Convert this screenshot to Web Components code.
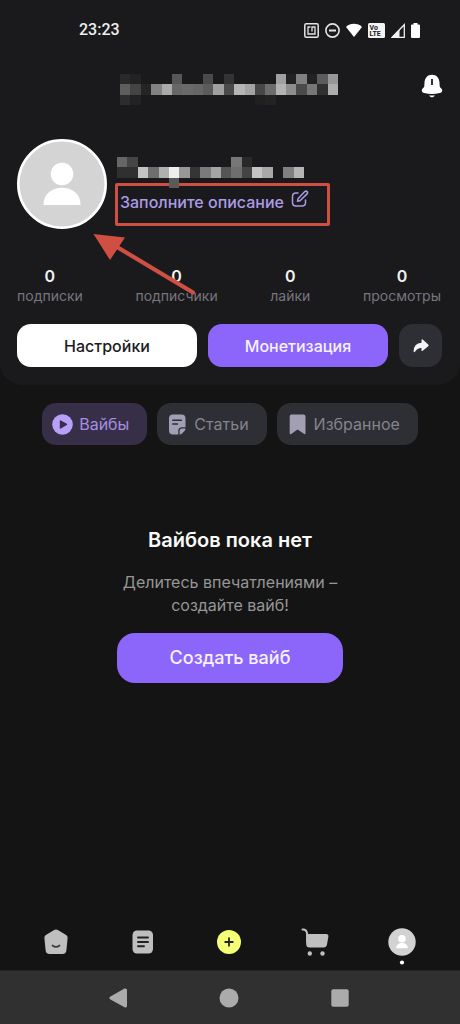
<!DOCTYPE html>
<html lang="ru">
<head>
<meta charset="utf-8">
<meta name="viewport" content="width=device-width, initial-scale=1">
<title>Профиль</title>
<style>
  html { background: #141414; }
  body { margin: 0; font-family: Inter, "Noto Sans", sans-serif; color: #fff; }
</style>
</head>
<body>
<vibe-app></vibe-app>
<script>
const define = (name, html, setup) => customElements.define(name, class extends HTMLElement {
  constructor() {
    super();
    const template = document.createElement('template');
    template.innerHTML = html;
    this.attachShadow({ mode: 'open' }).append(template.content.cloneNode(true));
  }
  connectedCallback() { if (setup) setup(this, this.shadowRoot); }
});

define('status-bar', `
<style>
  :host { display: flex; justify-content: space-between; align-items: center; height: 60px; padding: 0 40px 0 79px; box-sizing: border-box; font: 500 16px/20px Roboto, sans-serif; color: #eee; }
  div { display: flex; align-items: center; gap: 6px; }
  svg { display: block; }
</style>
<time>23:23</time>
<div>
  <svg width="15" height="15" viewBox="0 0 15 15" fill="none" stroke="#e4e4e4" stroke-width="1.5"><rect x=".8" y=".8" width="13.4" height="13.4" rx="1.5"/><path d="M6.500 4H4v7h7V4H8v4.500" stroke-width="1.300"/></svg>
  <svg width="15" height="15" viewBox="0 0 15 15" fill="none" stroke="#e4e4e4" stroke-width="1.600"><circle cx="7.500" cy="7.500" r="6.600"/><path d="M4 7.500h7" stroke-width="2"/></svg>
  <svg width="16" height="15" viewBox="0 0 16 15" fill="#fff"><path d="M8 14 0 4C4-.3 12-.3 16 4Z"/></svg>
  <svg width="17" height="15" viewBox="0 0 17 15"><rect width="17" height="15" rx="1.500" fill="#f4f4f4"/><g fill="#1a1a1c" font-family="Roboto, sans-serif" font-weight="700" font-size="7"><text x="1.500" y="7">Vo</text><text x="1.500" y="13.400">LTE</text></g></svg>
  <svg width="14" height="15" viewBox="0 0 14 15"><path d="M13.300 1.700v12.600H1Z" fill="none" stroke="#f0f0f0" stroke-width="1.300"/><path d="M8.500 6.500V14H1Z" fill="#f0f0f0"/></svg>
  <svg width="9" height="15" viewBox="0 0 9 15" fill="#fff"><path d="M2.500 0h4v1.600H8q1 0 1 1V14q0 1-1 1H1q-1 0-1-1V2.600q0-1 1-1h1.500Z"/></svg>
</div>`);

/* Censored text: rows of two-digit grey levels, ".." is a transparent cell. */
define('pixel-mosaic', `
<style>:host { display: block; } svg { display: block; }</style>`, (host, root) => {
  const rows = host.getAttribute('rows').split('|').map(r => r.trim().split(/\s+/));
  const cols = Math.max(...rows.map(r => r.length));
  const rects = rows.flatMap((r, y) => r.map((v, x) => v === '..' ? '' :
    `<rect x="${x}" y="${y}" width="1" height="1" fill="#${v}${v}${v}"/>`)).join('');
  const svg = document.createElementNS('http://www.w3.org/2000/svg', 'svg');
  svg.setAttribute('viewBox', `0 0 ${cols} ${rows.length}`);
  svg.setAttribute('preserveAspectRatio', 'none');
  svg.setAttribute('shape-rendering', 'crispEdges');
  svg.setAttribute('width', Math.round(cols * 10.4));
  svg.setAttribute('height', Math.round(rows.length * 10.4));
  svg.innerHTML = rects;
  root.append(svg);
});

define('title-bar', `
<style>
  :host { display: grid; grid-template-columns: 1fr auto 1fr; align-items: start; padding: 14px 17px 0 14px; }
  pixel-mosaic { grid-column: 2; }
  button { justify-self: end; background: none; border: 0; padding: 0; display: block; }
  svg { display: block; }
</style>
<pixel-mosaic rows="29 22 .. .. .. 57 .. .. 4a .. 33 .. .. .. .. a0 22 80 22 5c 97|5e 44 25 82 aa 66 6a 66 5b a0 4a b5 a3 47 6c b3 8e 4a 77 30 ae|2c 22 .. .. .. .. .. .. .. .. .. .. .. 20 23"></pixel-mosaic>
<button aria-label="Уведомления"><svg width="22" height="24" viewBox="0 0 22 24" fill="#fff"><path d="M11 .7c4.600 0 7.300 3.300 7.500 8l.2 3.200c.1 1 .6 1.600 1.400 2.300 2 1.800 1.200 4.200-1.400 4.900-4.800 1.200-10.600 1.200-15.400 0-2.600-.7-3.400-3.100-1.400-4.900.8-.7 1.300-1.300 1.400-2.300l.2-3.200c.2-4.700 2.900-8 7.500-8ZM8.300 21.200c1.600.3 3.800.3 5.400 0-.5 1.500-1.400 2-2.700 2s-2.200-.5-2.700-2Z"/><path d="M11 5v6" stroke="#1a1a1c" stroke-width="1.800"/></svg></button>`);

define('user-avatar', `
<style>
  :host { display: block; width: 90px; height: 90px; }
  svg { display: block; width: 100%; height: 100%; }
</style>
<svg viewBox="0 0 90 90"><circle cx="45" cy="45" r="43.700" fill="#d4d4d4" stroke="#fff" stroke-width="2.600"/><circle cx="45" cy="35" r="11.300" fill="#fff"/><path d="M26.500 66c-.8-23 37.800-23 37 0Z" fill="#fff"/></svg>`);

define('profile-head', `
<style>
  :host { display: flex; gap: 8px; padding: 34px 16px 0 17px; align-items: flex-start; position: relative; }
  .info { padding-top: 18px; }
  pixel-mosaic { position: relative; z-index: 1; margin-left: 2px; }
  a { display: flex; align-items: flex-start; gap: 7px; margin-top: -5px; box-sizing: border-box; width: 215px; height: 43px; padding: 4px 2px; border: 3px solid #cf4f43; border-radius: 2px; color: #ad9ae6; font-size: 16px; line-height: 24px; font-weight: 500; text-decoration: none; white-space: nowrap; }
  a svg { display: block; flex: none; }
  .arrow { position: absolute; left: 92px; top: 125px; z-index: 2; pointer-events: none; }
</style>
<user-avatar></user-avatar>
<div class="info">
  <pixel-mosaic rows="66 45 .. .. .. .. .. .. .. .. .. 77 29|30 30 c4 6e b0 ee 97 35 7b a5 55 6e 44 c4 a8 .. 80 b5|.. .. .. .. .. 5a"></pixel-mosaic>
  <a href="#description">Заполните описание
    <svg width="18" height="18" viewBox="0 0 18 18" fill="none" stroke="#ad9ae6" stroke-width="1.500" stroke-linecap="round" stroke-linejoin="round"><path d="M7 3H5Q1.500 3 1.500 6.500v6Q1.500 16 5 16h6q3.500 0 3.500-3.500V10"/><path d="m7 8.800 6.800-7.200q1.300-1 2.300 0t0 2.300L9 10.800l-2.500.5Z"/></svg>
  </a>
</div>
<svg class="arrow" width="106" height="66" viewBox="0 0 106 66"><path d="M20 14 101 62.500" stroke="#cf4f43" stroke-width="4.200" stroke-linecap="round"/><path d="M1.500 4 33 7.500 18 30Z" fill="#cf4f43"/></svg>`);

define('stat-item', `
<style>
  :host { display: block; text-align: center; color: #77757f; font-size: 14px; line-height: 20px; }
  b { display: block; color: #f2f2f2; font-size: 16px; line-height: 20px; font-weight: 600; }
</style>
<b><slot name="value"></slot></b><slot></slot>`);

define('action-button', `
<style>
  :host { display: block; min-width: 0; }
  :host([grow]) { flex: 1; }
  button { display: flex; align-items: center; justify-content: center; width: 100%; height: 43px; padding: 0; border: 0; border-radius: 14px; font: 500 16px/24px Inter, "Noto Sans", sans-serif; background: #8c66fb; color: #f6f2ff; }
  :host([kind=light]) button { background: #fff; color: #1c1c1e; }
  :host([kind=icon]) button { width: 43px; background: #2e2e35; }
  :host([kind=large]) button { height: 50px; border-radius: 18px; font-size: 18px; }
</style>
<button><slot></slot></button>`, (host, root) => {
  const label = host.getAttribute('label');
  if (label) root.querySelector('button').setAttribute('aria-label', label);
});

define('profile-panel', `
<style>
  :host { display: block; background: #1a1a1c; border-radius: 0 0 22px 22px; padding-bottom: 18px; }
  .stats { display: flex; justify-content: space-between; padding: 37px 19px 0 17px; }
  .actions { display: flex; gap: 11px; padding: 18px 18px 0 17px; }
  svg { display: block; }
</style>
<status-bar></status-bar>
<title-bar></title-bar>
<profile-head></profile-head>
<div class="stats">
  <stat-item><span slot="value">0</span>подписки</stat-item>
  <stat-item><span slot="value">0</span>подписчики</stat-item>
  <stat-item><span slot="value">0</span>лайки</stat-item>
  <stat-item><span slot="value">0</span>просмотры</stat-item>
</div>
<div class="actions">
  <action-button grow kind="light">Настройки</action-button>
  <action-button grow>Монетизация</action-button>
  <action-button kind="icon" label="Поделиться"><svg width="16" height="14" viewBox="0 0 16 14" fill="#f4f4f6"><path d="M8.500 1.200q0-1.400 1.200-.6l5.500 4.800q.9.900 0 1.800l-5.500 4.600q-1.200.8-1.200-.6V9Q4.500 8.800 2.200 12.500 1 14 .6 12.500.6 4.500 8.500 3.800Z"/></svg></action-button>
</div>`);

define('filter-chip', `
<style>
  :host { display: block; }
  button { display: flex; align-items: center; gap: 6px; height: 42px; padding: 0 18px 0 10px; border: 0; border-radius: 14px; font: 400 16px/24px Inter, "Noto Sans", sans-serif; background: #2e2e35; color: #85838f; white-space: nowrap; }
  :host([active]) button { background: #372f48; color: #a48ee0; }
</style>
<button><slot name="icon"></slot><slot></slot></button>`);

define('vibe-filters', `
<style>
  :host { display: flex; justify-content: center; gap: 10px; padding: 18px 0 0; }
  svg { display: block; }
</style>
<filter-chip active><svg slot="icon" width="21" height="21" viewBox="0 0 21 21"><circle cx="10.500" cy="10.500" r="10.300" fill="#b7a0fa"/><path d="M7.800 7q0-1.200 1-.6l6 3.400q.9.600 0 1.200l-6 3.600q-1 .5-1-.6Z" fill="#372f48"/></svg>Вайбы</filter-chip>
<filter-chip><svg slot="icon" width="21" height="21" viewBox="0 0 21 21"><path d="M6 .5h8.500q4 0 4 4v8.700H15q-3.700 0-3.700 3.700v3.600H6q-4 0-4-4v-12q0-4 4-4Z" fill="#a29fb5"/><path d="M18.500 14.500q0 1.500-1.200 2.700l-2 2q-1.200 1.300-2.700 1.300v-3.600q0-2.400 2.400-2.400Z" fill="#a29fb5"/><path d="M5.800 6.200h8.500M5.800 10h4.700" stroke="#2e2e35" stroke-width="1.600" stroke-linecap="round"/></svg>Статьи</filter-chip>
<filter-chip><svg slot="icon" width="21" height="21" viewBox="0 0 21 21"><path d="M4.500.5h12q2 0 2 2v16.500q0 2-1.500.8L10.500 15.500 4.200 20q-1.500 1-1.500-.8V2.500q0-2 1.800-2Z" fill="#a29fb5"/></svg>Избранное</filter-chip>`);

define('empty-state', `
<style>
  :host { display: flex; flex-direction: column; align-items: center; padding-top: 82px; text-align: center; }
  h1 { margin: 0; font-size: 20px; line-height: 26px; font-weight: 600; color: #fafafa; }
  p { margin: 18px 0 16px; font-size: 16px; line-height: 23px; color: #969696; }
  action-button { width: 49%; }
</style>
<h1>Вайбов пока нет</h1>
<p>Делитесь впечатлениями –<br>создайте вайб!</p>
<action-button kind="large">Создать вайб</action-button>`);

define('tab-bar', `
<style>
  :host { display: block; }
  nav { display: grid; grid-template-columns: repeat(5, 1fr); padding: 0 15px 0 13px; height: 57px; }
  a { display: flex; justify-content: center; align-items: center; height: 57px; }
  svg { display: block; overflow: visible; }
</style>
<nav>
  <a href="#home" aria-label="Главная"><svg width="26" height="28" viewBox="0 0 26 28"><path d="M10.700 2.200q2.300-1.500 4.600 0l7.800 4.800q1.700 1 1.500 3l-1.200 12.200Q23 26 19.500 26h-13Q3 26 2.600 22.200L1.400 10q-.2-2 1.500-3Z" fill="#bfbfbf"/><path d="M9.500 17.500q3.500 2.800 7 0" fill="none" stroke="#3a3a3a" stroke-width="1.700" stroke-linecap="round"/></svg></a>
  <a href="#articles" aria-label="Статьи"><svg width="22" height="24" viewBox="0 0 22 24"><rect x=".5" y=".5" width="20.500" height="23" rx="4.500" fill="#bfbfbf"/><path d="M6 7.500h10M6 12h10M6 16.300h6" stroke="#222" stroke-width="1.900" stroke-linecap="round"/></svg></a>
  <a href="#create" aria-label="Создать"><svg width="24" height="24" viewBox="0 0 24 24"><circle cx="12" cy="12" r="12" fill="#f5ff76"/><path d="M12 8.200v7.600M8.200 12h7.600" stroke="#222" stroke-width="1.800" stroke-linecap="round"/></svg></a>
  <a href="#cart" aria-label="Корзина"><svg width="28" height="28" viewBox="0 0 28 28" fill="#bfbfbf"><path d="M1.500 1.500Q5.500 1 6.200 6v8" fill="none" stroke="#bfbfbf" stroke-width="2" stroke-linecap="round"/><path d="M5.200 6h20q2.500 0 2.200 2.500l-1.400 8q-.5 3-3.500 3h-14q-3.300 0-3.300-3.500Z"/><circle cx="8.800" cy="25.500" r="2.200"/><circle cx="21.500" cy="25.500" r="2.200"/></svg></a>
  <a href="#profile" aria-label="Профиль"><svg width="28" height="28" viewBox="0 0 28 28"><circle cx="14" cy="14" r="13.700" fill="#d2d2d2"/><circle cx="14" cy="10.800" r="3.800" fill="#fff"/><path d="M8.200 20.200c-.2-7 11.800-7 11.600 0Z" fill="#fff"/><circle cx="14" cy="34.500" r="2.100" fill="#fff"/></svg></a>
</nav>`);

define('system-nav', `
<style>
  :host { display: flex; justify-content: center; align-items: center; height: 54px; gap: 91px; padding-right: 2px; background: #303030; border-top: 1px solid #242424; box-sizing: border-box; }
  button { display: block; padding: 0; border: 0; background: none; }
  svg { display: block; }
</style>
<button aria-label="Назад"><svg width="20" height="20" viewBox="0 0 20 20" fill="#ababab"><path d="M2 8.800 16.500.6Q19 0 19 2v16q0 2-2.500 1.300L2 11.200q-1.500-1.200 0-2.400Z"/></svg></button>
<button aria-label="Домой"><svg width="20" height="20" viewBox="0 0 20 20" fill="#ababab"><circle cx="10" cy="10" r="9.500"/></svg></button>
<button aria-label="Недавние"><svg width="20" height="20" viewBox="0 0 20 20" fill="#ababab"><rect x="1.300" y="1.300" width="17.400" height="17.400" rx="2"/></svg></button>`);

define('vibe-app', `
<style>
  :host { display: flex; flex-direction: column; min-height: 100vh; background: #141414; overflow: hidden; }
  main { flex: 1; }
</style>
<profile-panel></profile-panel>
<main>
  <vibe-filters></vibe-filters>
  <empty-state></empty-state>
</main>
<tab-bar></tab-bar>
<system-nav></system-nav>`);
</script>
</body>
</html>
